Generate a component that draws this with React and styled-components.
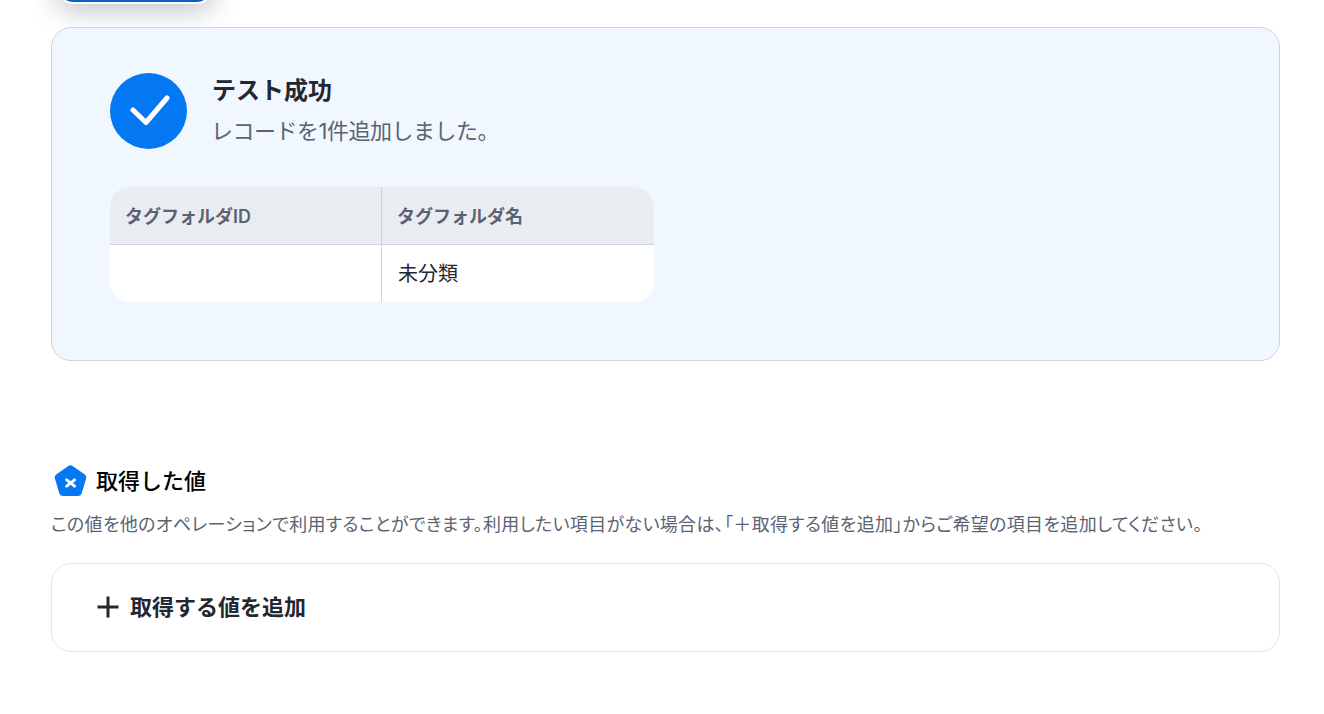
import styled, { createGlobalStyle } from 'styled-components'

const GlobalStyle = createGlobalStyle`
  html, body {
    margin: 0;
    height: 100%;
    overflow: hidden;
    background: #fff;
  }
  body {
    font-family: Inter, "Noto Sans CJK JP", sans-serif;
  }
`

const Page = styled.div`
  width: 1324px;
  height: 714px;
  box-sizing: border-box;
  padding: 0 44px 0 51px;
  overflow: hidden;
`

const TestButton = styled.div`
  width: 152px;
  height: 40px;
  margin: -40px 0 23px 6px;
  background: #0a5fc4;
  border: 2px solid #fff;
  border-radius: 16px;
  box-shadow: 0 6px 28px rgba(40, 50, 60, 0.3);
`

const ResultPanel = styled.section`
  height: 334px;
  box-sizing: border-box;
  padding: 44px 58px;
  background: #f0f7ff;
  border: 1px solid #ced3dc;
  border-radius: 20px;
`

const ResultHead = styled.div`
  display: flex;
  align-items: center;
  gap: 24px;
  height: 77px;
`

const CheckCircle = styled.div`
  width: 77px;
  height: 76px;
  border-radius: 50%;
  background: #0477f2;
  display: flex;
  align-items: center;
  justify-content: center;
`

const ResultText = styled.div`
  display: flex;
  flex-direction: column;
  gap: 9px;
  margin-top: -1px;
`

const ResultTitle = styled.div`
  margin-left: 1px;
  font-size: 24px;
  line-height: 32px;
  font-weight: 600;
  color: #23272f;
`

const ResultSub = styled.div`
  font-size: 22px;
  line-height: 30px;
  letter-spacing: -0.5px;
  color: #5b6373;
`

const Table = styled.div`
  display: grid;
  grid-template-columns: 272px 272px;
  grid-template-rows: 58px 57px;
  width: 544px;
  margin-top: 38px;
  border-radius: 20px;
  overflow: hidden;
  background: #fff;
`

const HeadCell = styled.div`
  display: flex;
  align-items: center;
  padding: 0 0 2px 15px;
  box-sizing: border-box;
  background: #e9edf2;
  border-bottom: 1px solid #ced3dc;
  border-right: ${(props) => (props.$last ? 'none' : '1px solid #ced3dc')};
  font-size: 18px;
  font-weight: 600;
  color: #5b6373;
`

const BodyCell = styled.div`
  display: flex;
  align-items: center;
  padding: 0 0 2px 16px;
  box-sizing: border-box;
  border-right: ${(props) => (props.$last ? 'none' : '1px solid #ced3dc')};
  font-size: 20px;
  color: #23272f;
`

const ValuesSection = styled.section`
  margin-top: 103px;
`

const ValuesHead = styled.div`
  display: flex;
  align-items: center;
  gap: 9px;
  height: 34px;
  padding-left: 3px;
`

const ValuesTitle = styled.h2`
  margin: 0;
  font-size: 22px;
  line-height: 34px;
  font-weight: 500;
  color: #000;
`

const ValuesNote = styled.p`
  margin: 14px 0 0;
  font-size: 18px;
  line-height: 26px;
  font-feature-settings: "palt";
  letter-spacing: 0.32px;
  color: #5b6373;
  white-space: nowrap;
`

const AddCard = styled.div`
  display: flex;
  align-items: center;
  gap: 10px;
  height: 89px;
  margin-top: 25px;
  box-sizing: border-box;
  padding: 0 0 2px 44px;
  background: #fff;
  border: 1px solid #e4e6eb;
  border-radius: 20px;
`

const AddLabel = styled.span`
  margin-bottom: 4px;
  font-size: 22px;
  font-weight: 600;
  color: #23272f;
`

const CheckIcon = () => (
  <svg width="42" height="34" viewBox="0 0 42 34" fill="none">
    <path d="M5 16 L18 28.5 L39 4" stroke="#fff" strokeWidth="5" strokeLinecap="round" strokeLinejoin="round" />
  </svg>
)

const PentagonIcon = () => (
  <svg width="33" height="32" viewBox="0 0 33 32">
    <path
      d="M14.4 1 Q16.5 -0.3 18.6 1 L30.8 9.6 Q32.8 11 32.1 13.4 L27.6 28.6 Q26.9 31 24.4 31 L8.6 31 Q6.1 31 5.4 28.6 L0.9 13.4 Q0.2 11 2.2 9.6 Z"
      fill="#0477f2"
    />
    <path d="M12.6 14.8 L20.6 21.2 M20.6 14.8 L12.6 21.2" stroke="#fff" strokeWidth="2.8" strokeLinecap="round" />
  </svg>
)

const PlusIcon = () => (
  <svg width="24" height="24" viewBox="0 0 24 24" fill="none">
    <path d="M12 1.5 V22.5 M1.5 12 H22.5" stroke="#23272f" strokeWidth="3" />
  </svg>
)

const App = () => {
  return (
    <Page>
      <GlobalStyle />
      <TestButton />
      <ResultPanel>
        <ResultHead>
          <CheckCircle>
            <CheckIcon />
          </CheckCircle>
          <ResultText>
            <ResultTitle>テスト成功</ResultTitle>
            <ResultSub>レコードを1件追加しました。</ResultSub>
          </ResultText>
        </ResultHead>
        <Table>
          <HeadCell>タグフォルダID</HeadCell>
          <HeadCell $last>タグフォルダ名</HeadCell>
          <BodyCell />
          <BodyCell $last>未分類</BodyCell>
        </Table>
      </ResultPanel>
      <ValuesSection>
        <ValuesHead>
          <PentagonIcon />
          <ValuesTitle>取得した値</ValuesTitle>
        </ValuesHead>
        <ValuesNote>この値を他のオペレーションで利用することができます。利用したい項目がない場合は、「＋取得する値を追加」からご希望の項目を追加してください。</ValuesNote>
        <AddCard>
          <PlusIcon />
          <AddLabel>取得する値を追加</AddLabel>
        </AddCard>
      </ValuesSection>
    </Page>
  )
}

export default App
